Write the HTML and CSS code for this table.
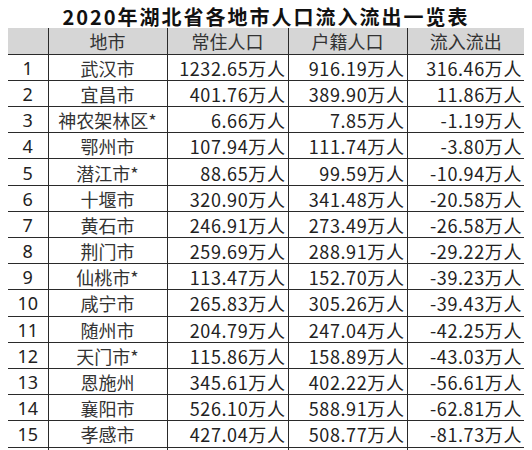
FILE: index.html
```html
<!DOCTYPE html>
<html lang="zh-CN">
<head>
<meta charset="utf-8">
<link rel="stylesheet" href="styles.css">
</head>
<body>
<div class="title">2020年湖北省各地市人口流入流出一览表</div>
<table class="data">
<colgroup>
<col class="c1"><col class="c2"><col class="c3"><col class="c4"><col class="c5">
</colgroup>
<thead>
<tr><th></th><th>地市</th><th>常住人口</th><th>户籍人口</th><th>流入流出</th></tr>
</thead>
<tbody>
<tr><td class="idx">1</td><td class="name">武汉市</td><td class="num">1232.65万人</td><td class="num">916.19万人</td><td class="num">316.46万人</td></tr>
<tr><td class="idx">2</td><td class="name">宜昌市</td><td class="num">401.76万人</td><td class="num">389.90万人</td><td class="num">11.86万人</td></tr>
<tr><td class="idx">3</td><td class="name">神农架林区*</td><td class="num">6.66万人</td><td class="num">7.85万人</td><td class="num">-1.19万人</td></tr>
<tr><td class="idx">4</td><td class="name">鄂州市</td><td class="num">107.94万人</td><td class="num">111.74万人</td><td class="num">-3.80万人</td></tr>
<tr><td class="idx">5</td><td class="name">潜江市*</td><td class="num">88.65万人</td><td class="num">99.59万人</td><td class="num">-10.94万人</td></tr>
<tr><td class="idx">6</td><td class="name">十堰市</td><td class="num">320.90万人</td><td class="num">341.48万人</td><td class="num">-20.58万人</td></tr>
<tr><td class="idx">7</td><td class="name">黄石市</td><td class="num">246.91万人</td><td class="num">273.49万人</td><td class="num">-26.58万人</td></tr>
<tr><td class="idx">8</td><td class="name">荆门市</td><td class="num">259.69万人</td><td class="num">288.91万人</td><td class="num">-29.22万人</td></tr>
<tr><td class="idx">9</td><td class="name">仙桃市*</td><td class="num">113.47万人</td><td class="num">152.70万人</td><td class="num">-39.23万人</td></tr>
<tr><td class="idx">10</td><td class="name">咸宁市</td><td class="num">265.83万人</td><td class="num">305.26万人</td><td class="num">-39.43万人</td></tr>
<tr><td class="idx">11</td><td class="name">随州市</td><td class="num">204.79万人</td><td class="num">247.04万人</td><td class="num">-42.25万人</td></tr>
<tr><td class="idx">12</td><td class="name">天门市*</td><td class="num">115.86万人</td><td class="num">158.89万人</td><td class="num">-43.03万人</td></tr>
<tr><td class="idx">13</td><td class="name">恩施州</td><td class="num">345.61万人</td><td class="num">402.22万人</td><td class="num">-56.61万人</td></tr>
<tr><td class="idx">14</td><td class="name">襄阳市</td><td class="num">526.10万人</td><td class="num">588.91万人</td><td class="num">-62.81万人</td></tr>
<tr><td class="idx">15</td><td class="name">孝感市</td><td class="num">427.04万人</td><td class="num">508.77万人</td><td class="num">-81.73万人</td></tr>
<tr><td class="idx">16</td><td class="name">荆州市</td><td class="num">523.12万人</td><td class="num">641.40万人</td><td class="num">-118.28万人</td></tr>
</tbody>
</table>
</body>
</html>
```
FILE: styles.css
```css
html, body {
  margin: 0;
  padding: 0;
  background: #ffffff;
}
body {
  width: 532px;
  height: 450px;
  overflow: hidden;
  font-family: "Noto Sans CJK SC", "Noto Sans", sans-serif;
  color: #222222;
}
.title {
  box-sizing: border-box;
  height: 28px;
  padding-top: 7px;
  line-height: 20px;
  text-align: center;
  font-size: 20px;
  font-weight: bold;
  letter-spacing: 2px;
  color: #111111;
}
.data {
  margin-left: 8px;
  width: 516px;
  border-collapse: collapse;
  table-layout: fixed;
  font-size: 18px;
}
.c1 { width: 40px; }
.c2 { width: 119px; }
.c3 { width: 121px; }
.c4 { width: 119px; }
.c5 { width: 117px; }
.data th,
.data td {
  box-sizing: border-box;
  height: 26.2px;
  padding: 0 2px;
  line-height: 24px;
  border-left: 1px solid #2a2a2a;
  border-bottom: 1px solid #2a2a2a;
  white-space: nowrap;
  overflow: hidden;
}
.data th:first-child,
.data td:first-child {
  border-left: none;
}
.data th {
  background: #d6d6d6;
  font-weight: normal;
  color: #333333;
  text-align: center;
}
.data td {
  padding-top: 1px;
}
.idx {
  text-align: center;
  font-family: "Noto Sans", "Noto Sans CJK SC", sans-serif;
}
.name {
  text-align: center;
  color: #333333;
}
.num {
  text-align: right;
  letter-spacing: 0.6px;
  padding-right: 1px;
}
```
